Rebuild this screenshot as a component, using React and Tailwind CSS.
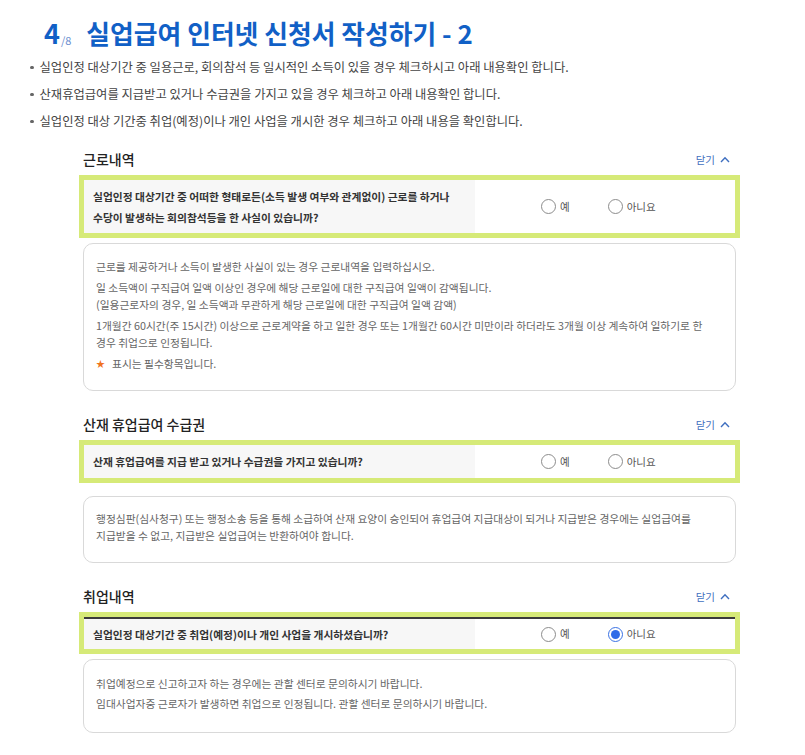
const notes = [
  "실업인정 대상기간 중 일용근로, 회의참석 등 일시적인 소득이 있을 경우 체크하시고 아래 내용확인 합니다.",
  "산재휴업급여를 지급받고 있거나 수급권을 가지고 있을 경우 체크하고 아래 내용확인 합니다.",
  "실업인정 대상 기간중 취업(예정)이나 개인 사업을 개시한 경우 체크하고 아래 내용을 확인합니다.",
];

function Radio({ label, checked }) {
  return (
    <label className="flex items-center gap-[4px]">
      {checked ? (
        <span className="flex h-[15px] w-[15px] items-center justify-center rounded-full border-[1.5px] border-[#3a72e4] bg-white">
          <span className="h-[9px] w-[9px] rounded-full bg-[#2f6ce8]" />
        </span>
      ) : (
        <span className="h-[15px] w-[15px] rounded-full border border-[#8c8c8c] bg-white" />
      )}
      <span className="text-[10.5px] text-[#555]">{label}</span>
    </label>
  );
}

function SectionHead({ title, className = "" }) {
  return (
    <div className={`flex h-[31px] items-center justify-between pl-[4px] pr-[10px] ${className}`}>
      <h3 className="text-[14px] font-medium text-[#222]">{title}</h3>
      <button className="flex items-center gap-[5px] text-[10.5px] text-[#3f6fc0]">
        닫기
        <svg width="10" height="7" viewBox="0 0 10 7" fill="none">
          <polyline points="1,6 5,1.8 9,6" stroke="#3f6fc0" strokeWidth="1.4" />
        </svg>
      </button>
    </div>
  );
}

function Question({ children, answer, height, dark }) {
  return (
    <div className={`flex border-[5px] border-[#d6ea78] ${height}`}>
      <div
        className={`flex w-[391px] items-center bg-[#f7f7f7] pl-[9px] text-[10.75px] font-semibold leading-[21px] text-[#333] ${
          dark ? "border-t-2 border-[#3a3a3a]" : ""
        }`}
      >
        <div>{children}</div>
      </div>
      <div
        className={`flex flex-1 items-center gap-[38px] bg-white pl-[66px] ${
          dark ? "border-t-2 border-[#3a3a3a]" : ""
        }`}
      >
        <Radio label="예" checked={answer === "yes"} />
        <Radio label="아니요" checked={answer === "no"} />
      </div>
    </div>
  );
}

function InfoBox({ children, className = "" }) {
  return (
    <div
      className={`mx-[4px] rounded-[10px] border border-[#d9d9d9] bg-white pl-[12px] text-[10.75px] leading-[17px] text-[#666] ${className}`}
    >
      {children}
    </div>
  );
}

export default function App() {
  return (
    <div className="h-[755px] w-[805px] overflow-hidden bg-white font-['Noto_Sans_CJK_KR',sans-serif]">
      <header className="flex h-[54px] items-end pb-[8px] pl-[44px]">
        <span className="text-[27px] font-bold leading-none text-[#1160c6]">4</span>
        <span className="ml-[1px] text-[11px] leading-none text-[#6b8fcf]">/8</span>
        <h1 className="ml-[15px] text-[25.8px] font-semibold leading-none text-[#1160c6]">
          실업급여 인터넷 신청서 작성하기 - 2
        </h1>
      </header>

      <ul className="pl-[30px]">
        {notes.map((n) => (
          <li key={n} className="flex h-[27px] items-center gap-[6px] text-[12.3px] text-[#444]">
            <span className="h-[3.5px] w-[3.5px] rounded-full bg-[#666]" />
            {n}
          </li>
        ))}
      </ul>

      <div className="ml-[79px] mt-[9px] w-[661px]">
        <SectionHead title="근로내역" />
        <Question answer={null} height="h-[63px]">
          실업인정 대상기간 중 어떠한 형태로든(소득 발생 여부와 관계없이) 근로를 하거나
          <br />
          수당이 발생하는 회의참석등을 한 사실이 있습니까?
        </Question>
        <InfoBox className="mt-[5px] h-[148px] pt-[14px]">
          <p>근로를 제공하거나 소득이 발생한 사실이 있는 경우 근로내역을 입력하십시오.</p>
          <p className="mt-[4px]">
            일 소득액이 구직급여 일액 이상인 경우에 해당 근로일에 대한 구직급여 일액이 감액됩니다.
            <br />
            (일용근로자의 경우, 일 소득액과 무관하게 해당 근로일에 대한 구직급여 일액 감액)
          </p>
          <p className="mt-[4px]">
            1개월간 60시간(주 15시간) 이상으로 근로계약을 하고 일한 경우 또는 1개월간 60시간 미만이라 하더라도 3개월 이상 계속하여 일하기로 한
            <br />
            경우 취업으로 인정됩니다.
          </p>
          <p className="mt-[4px] flex items-center">
            <span className="mr-[7px] text-[9px] text-[#f0731f]">★</span>표시는 필수항목입니다.
          </p>
        </InfoBox>

        <SectionHead title="산재 휴업급여 수급권" className="mt-[18px]" />
        <Question answer={null} height="h-[43px]">
          산재 휴업급여를 지급 받고 있거나 수급권을 가지고 있습니까?
        </Question>
        <InfoBox className="mt-[13px] h-[67px] pt-[13px]">
          <p>
            행정심판(심사청구) 또는 행정소송 등을 통해 소급하여 산재 요양이 승인되어 휴업급여 지급대상이 되거나 지급받은 경우에는 실업급여를
            <br />
            지급받을 수 없고, 지급받은 실업급여는 반환하여야 합니다.
          </p>
        </InfoBox>

        <SectionHead title="취업내역" className="mt-[18px]" />
        <Question answer="no" height="h-[42px]" dark>
          실업인정 대상기간 중 취업(예정)이나 개인 사업을 개시하셨습니까?
        </Question>
        <InfoBox className="mt-[5px] h-[74px] pt-[15px]">
          <p>취업예정으로 신고하고자 하는 경우에는 관할 센터로 문의하시기 바랍니다.</p>
          <p className="mt-[3px]">임대사업자중 근로자가 발생하면 취업으로 인정됩니다. 관할 센터로 문의하시기 바랍니다.</p>
        </InfoBox>
      </div>
    </div>
  );
}
